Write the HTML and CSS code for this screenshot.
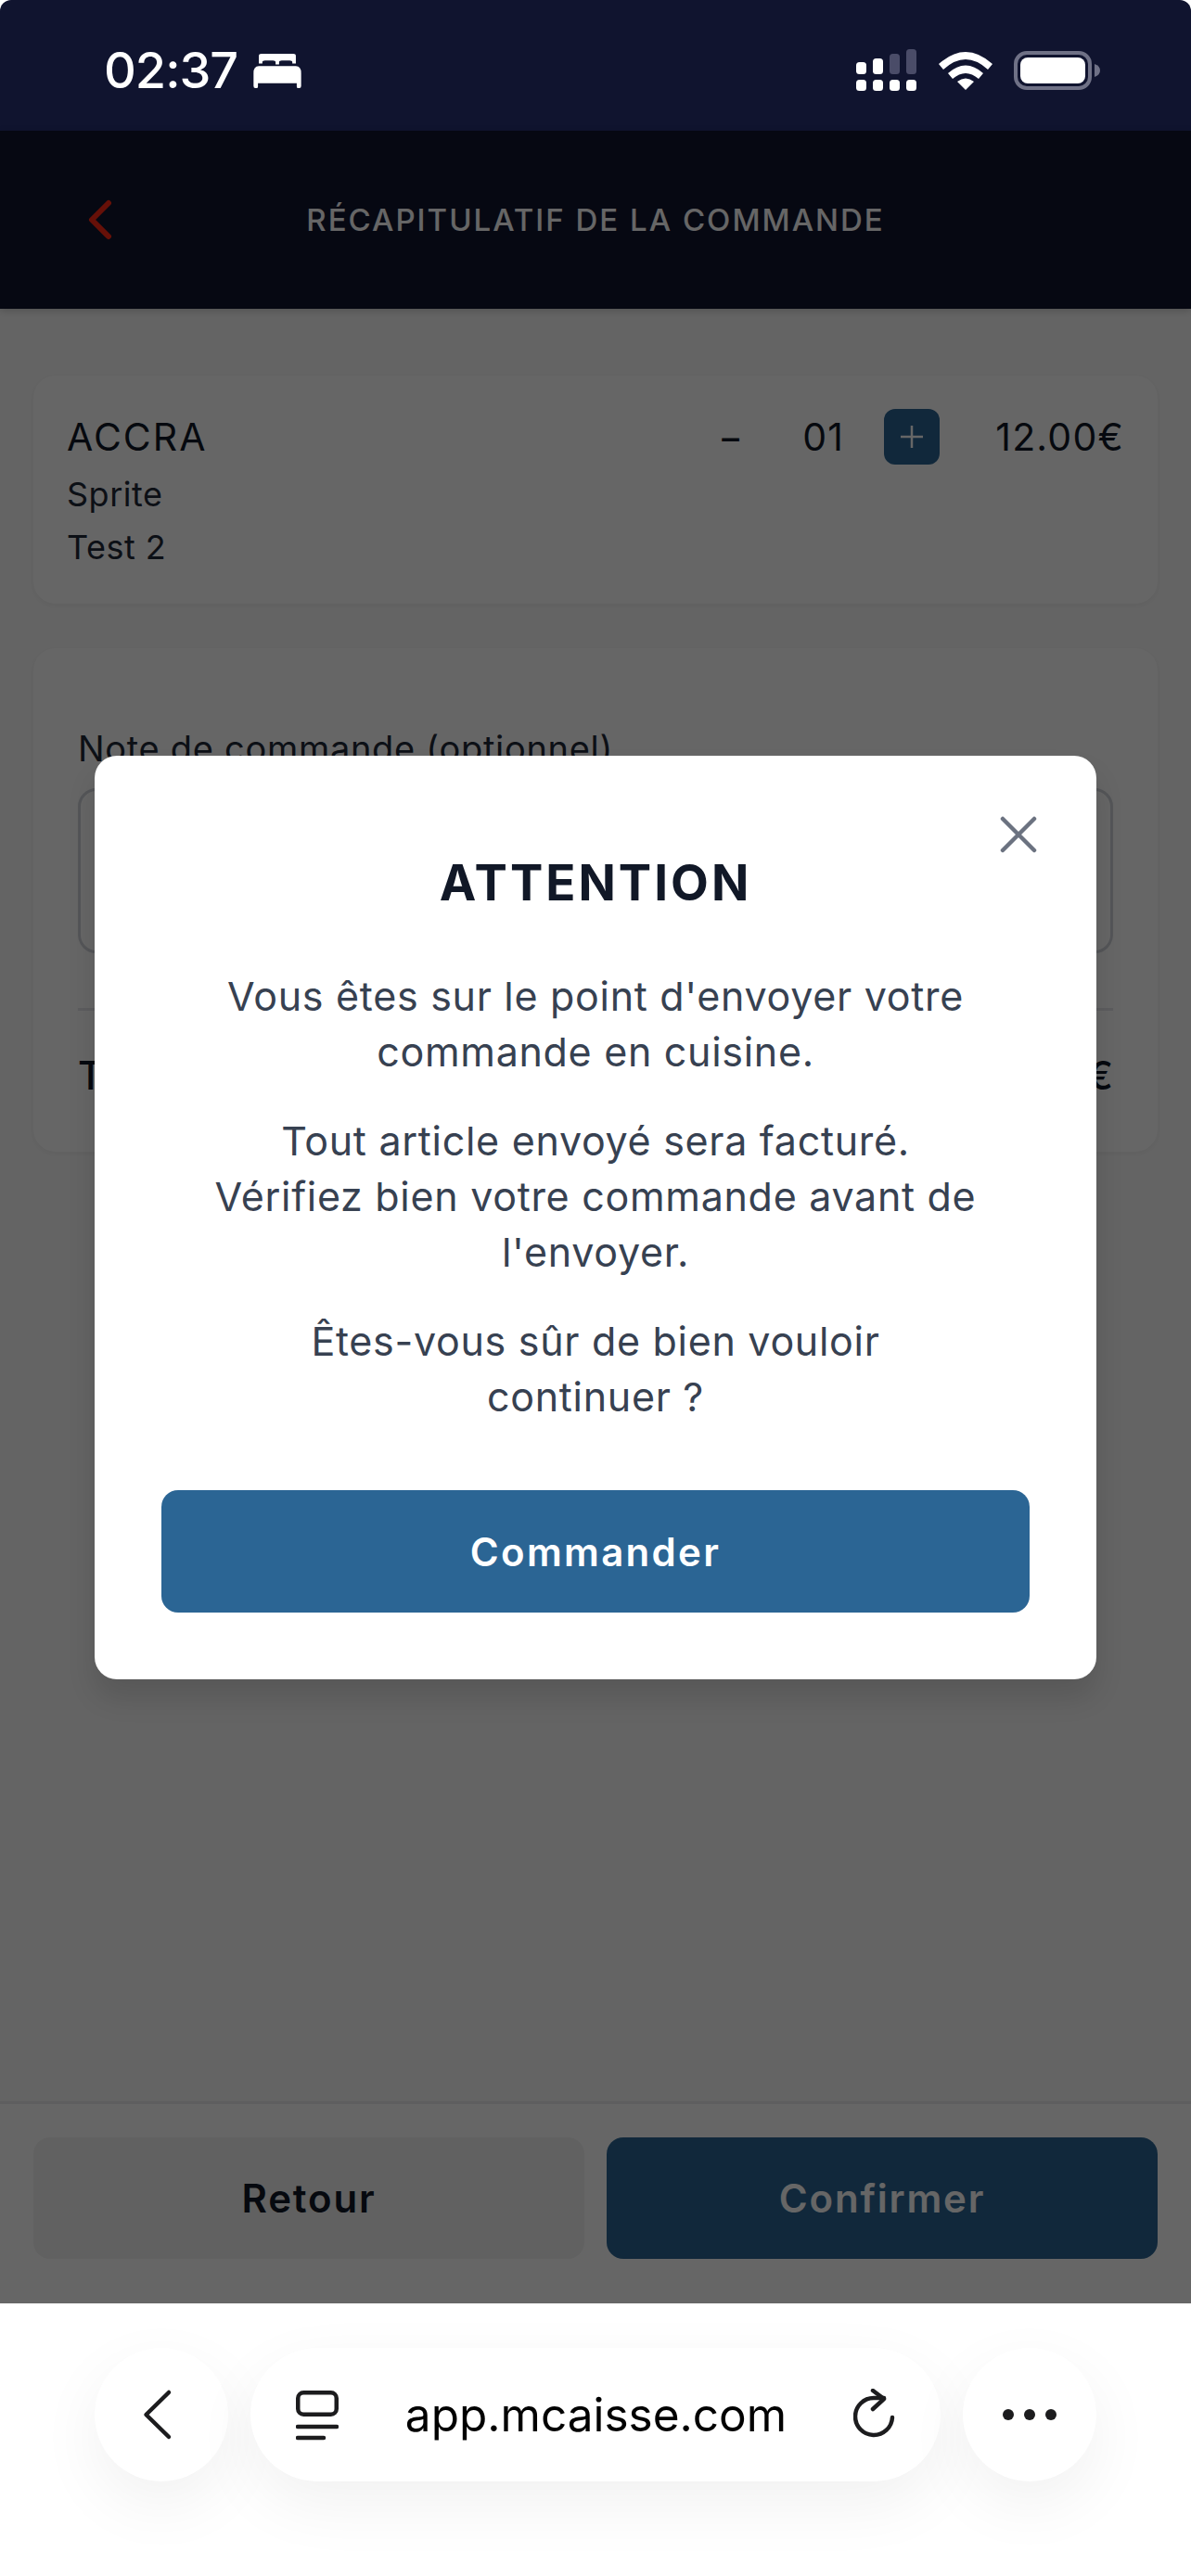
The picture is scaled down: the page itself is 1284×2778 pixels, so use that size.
FILE: index.html
```html
<!DOCTYPE html>
<html lang="fr">
<head>
    <meta charset="UTF-8">
    <meta name="viewport" content="width=device-width, initial-scale=1.0">
    <title>Récapitulatif de la commande</title>
    <link rel="stylesheet" href="styles.css">
</head>
<body>
    <div class="screen">
        <!-- iOS status bar -->
        <div class="status-bar">
            <div class="status-left">
                <span class="clock">02:37</span>
                <svg class="bed-icon" width="56" height="38" viewBox="0 0 56 40">
                    <path fill="#fff" d="M7 2.5Q7 0 10 0H46Q49 0 49 2.5V11H45V9.5Q45 7.5 42 7.5H33Q30 7.5 30 9.5V12H26V9.5Q26 7.5 23 7.5H14Q11 7.5 11 9.5V11H7Z"/>
                    <path fill="#fff" d="M7 14H49Q55 14 55 22V36.5Q55 39 53 39H51.5Q50 39 50 37V33.5H6V37Q6 39 4.5 39H3Q1 39 1 36.5V22Q1 14 7 14Z"/>
                </svg>
            </div>
            <div class="status-right">
                <svg class="signal-icon" width="66" height="46" viewBox="0 0 66 46">
                    <rect x="0" y="14" width="11" height="13" rx="3.5" fill="#fff"/>
                    <rect x="18" y="10" width="11" height="17" rx="3.5" fill="#fff"/>
                    <rect x="36" y="5" width="11" height="22" rx="3.5" fill="#4a4c68"/>
                    <rect x="54" y="0" width="11" height="27" rx="3.5" fill="#4a4c68"/>
                    <rect x="0" y="33" width="11" height="12" rx="3.5" fill="#fff"/>
                    <rect x="18" y="33" width="11" height="12" rx="3.5" fill="#fff"/>
                    <rect x="36" y="33" width="11" height="12" rx="3.5" fill="#fff"/>
                    <rect x="54" y="33" width="11" height="12" rx="3.5" fill="#fff"/>
                </svg>
                <svg class="wifi-icon" width="58" height="42" viewBox="0 0 58 42">
                    <path fill="#fff" d="M0 14Q29 -12 58 14L53 20Q29 -2 5 20Z"/>
                    <path fill="#fff" d="M10 24Q29 7 48 24L43 30Q29 18 15 30Z"/>
                    <path fill="#fff" d="M20 33Q29 26 38 33L29 42Z"/>
                </svg>
                <svg class="battery-icon" width="94" height="42" viewBox="0 0 94 42">
                    <rect x="2" y="2" width="80" height="38" rx="12" fill="none" stroke="#6f7186" stroke-width="4"/>
                    <rect x="7" y="7" width="70" height="28" rx="8" fill="#fff"/>
                    <path fill="#6f7186" d="M87 14Q93 16 93 21Q93 26 87 28Z"/>
                </svg>
            </div>
        </div>

        <div class="app">
            <header class="app-header">
                <svg class="header-back" width="28" height="44" viewBox="0 0 28 44">
                    <path d="M23 4L5 22L23 40" fill="none" stroke="#ff2a14" stroke-width="6" stroke-linecap="round" stroke-linejoin="round"/>
                </svg>
                <h1 class="header-title">RÉCAPITULATIF DE LA COMMANDE</h1>
            </header>

            <main class="content">
                <section class="card item-card">
                    <div class="item-info">
                        <div class="item-name">ACCRA</div>
                        <div class="item-option">Sprite</div>
                        <div class="item-option">Test 2</div>
                    </div>
                    <div class="item-controls">
                        <span class="qty-minus">−</span>
                        <span class="qty-value">01</span>
                        <span class="qty-plus">
                            <svg width="24" height="24" viewBox="0 0 24 24">
                                <path d="M12 0V24M0 12H24" stroke="#fff" stroke-width="2.5"/>
                            </svg>
                        </span>
                        <span class="item-price">12.00€</span>
                    </div>
                </section>

                <section class="card note-card">
                    <label class="note-label">Note de commande (optionnel)</label>
                    <div class="note-box"></div>
                    <div class="total-row">
                        <span>Total</span>
                        <span>12.00€</span>
                    </div>
                </section>
            </main>

            <footer class="app-footer">
                <button class="btn btn-back">Retour</button>
                <button class="btn btn-confirm">Confirmer</button>
            </footer>

            <!-- Confirmation dialog -->
            <div class="overlay">
                <div class="modal">
                    <svg class="modal-close" width="40" height="40" viewBox="0 0 40 40">
                        <path d="M3 3L37 37M37 3L3 37" stroke="#6b7280" stroke-width="4.5" stroke-linecap="round"/>
                    </svg>
                    <h2 class="modal-title">ATTENTION</h2>
                    <p class="modal-text">Vous êtes sur le point d'envoyer votre commande en cuisine.</p>
                    <p class="modal-text">Tout article envoyé sera facturé.<br>Vérifiez bien votre commande avant de l'envoyer.</p>
                    <p class="modal-text modal-text-last">Êtes-vous sûr de bien vouloir<br>continuer ?</p>
                    <button class="btn-order">Commander</button>
                </div>
            </div>
        </div>

        <!-- Browser toolbar -->
        <div class="browser-bar">
            <div class="round-btn">
                <svg width="40" height="56" viewBox="0 0 40 56">
                    <path d="M28 4L3.5 28L28 52" fill="none" stroke="#1c1c1e" stroke-width="4.5" stroke-linecap="round" stroke-linejoin="round"/>
                </svg>
            </div>
            <div class="url-pill">
                <svg width="46" height="56" viewBox="0 0 46 56">
                    <rect x="2.25" y="4.25" width="41.5" height="23.5" rx="6" fill="none" stroke="#1c1c1e" stroke-width="4.5"/>
                    <path d="M2 41H44M2 53H30" stroke="#1c1c1e" stroke-width="4.5" stroke-linecap="round"/>
                </svg>
                <span class="url-text">app.mcaisse.com</span>
                <svg width="46" height="56" viewBox="0 0 46 56">
                    <path d="M42 31A20 20 0 1 1 22 10H33" fill="none" stroke="#1c1c1e" stroke-width="4.5" stroke-linecap="round"/>
                    <path d="M21 2L33 11L21 22" fill="none" stroke="#1c1c1e" stroke-width="4.5" stroke-linecap="round" stroke-linejoin="round"/>
                </svg>
            </div>
            <div class="round-btn">
                <span class="dot"></span><span class="dot"></span><span class="dot"></span>
            </div>
        </div>
    </div>
</body>
</html>
```

FILE: styles.css
```css
* {
    box-sizing: border-box;
}
body {
    margin: 0;
    background: #fff;
    font-family: Inter, "Liberation Sans", sans-serif;
}
.screen {
    width: 1284px;
    height: 2778px;
    display: flex;
    flex-direction: column;
    overflow: hidden;
    border-radius: 12px 12px 0 0;
}

/* status bar */
.status-bar {
    height: 141px;
    flex: none;
    padding: 10px 97px 0 112px;
    display: flex;
    justify-content: space-between;
    align-items: center;
    background: #10142f;
    color: #fff;
}
.status-left {
    display: flex;
    align-items: center;
    gap: 15px;
}
.clock {
    font-size: 54px;
    font-weight: 500;
    letter-spacing: -1px;
}
.bed-icon {
    margin-top: 2px;
}
.status-right {
    display: flex;
    align-items: center;
    gap: 23px;
}

/* app */
.app {
    flex: 1;
    position: relative;
    display: flex;
    flex-direction: column;
    background: #fafafa;
}
.app-header {
    height: 192px;
    flex: none;
    position: relative;
    display: flex;
    align-items: center;
    justify-content: center;
    background: #10142f;
    box-shadow: 0 2px 8px rgba(0, 0, 0, 0.2);
}
.header-back {
    position: absolute;
    left: 94px;
    top: 74px;
}
.header-title {
    margin: 0;
    color: #fff;
    font-size: 33px;
    font-weight: 500;
    letter-spacing: 2px;
}
.content {
    flex: 1;
    padding: 72px 36px 0;
}
.card {
    background: #fff;
    border-radius: 24px;
    box-shadow: 0 2px 6px rgba(0, 0, 0, 0.05);
}
.item-card {
    height: 246px;
    padding: 36px 36px 0;
    display: flex;
    justify-content: space-between;
    align-items: flex-start;
}
.item-name {
    margin: 2px 0 6px;
    font-size: 41px;
    line-height: 56px;
    letter-spacing: 2px;
    color: #111827;
}
.item-option {
    font-size: 36px;
    line-height: 57px;
    letter-spacing: 0.5px;
    color: #1f2937;
}
.item-controls {
    display: flex;
    align-items: center;
    font-size: 41px;
    letter-spacing: 1.2px;
    color: #111827;
}
.qty-minus {
    width: 30px;
    text-align: center;
}
.qty-value {
    margin-left: 62px;
    width: 44px;
    text-align: center;
}
.qty-plus {
    margin-left: 44px;
    width: 60px;
    height: 60px;
    border-radius: 12px;
    background: #2b6594;
    display: flex;
    align-items: center;
    justify-content: center;
}
.item-price {
    margin-left: 60px;
}
.note-card {
    margin-top: 48px;
    height: 543px;
    padding: 84px 48px 0;
}
.note-label {
    display: block;
    font-size: 38px;
    line-height: 48px;
    letter-spacing: 0.7px;
    color: #1f2937;
}
.note-box {
    margin-top: 19px;
    height: 178px;
    border: 3px solid #d1d5db;
    border-radius: 20px;
}
.total-row {
    margin-top: 59px;
    padding-top: 44px;
    border-top: 3px solid #e5e7eb;
    display: flex;
    justify-content: space-between;
    font-size: 42px;
    font-weight: 500;
    color: #111827;
}
.app-footer {
    height: 218px;
    flex: none;
    padding: 36px 36px 48px;
    display: grid;
    grid-template-columns: 1fr 1fr;
    gap: 24px;
    border-top: 3px solid #ececee;
    background: #fff;
}
.btn {
    border: none;
    border-radius: 18px;
    font-family: inherit;
    font-size: 42px;
    font-weight: 600;
    letter-spacing: 1.8px;
}
.btn-back {
    background: #f2f2f2;
    color: #111827;
}
.btn-confirm {
    background: #2b6594;
    color: #fff;
}

/* dialog */
.overlay {
    position: absolute;
    inset: 0;
    background: rgba(0, 0, 0, 0.6);
}
.modal {
    position: absolute;
    left: 102px;
    top: 674px;
    width: 1080px;
    height: 996px;
    padding: 105px 72px 0;
    background: #fff;
    border-radius: 24px;
    text-align: center;
    box-shadow: 0 20px 30px rgba(0, 0, 0, 0.12);
}
.modal-close {
    position: absolute;
    top: 65px;
    right: 64px;
}
.modal-title {
    margin: 0 0 60px;
    font-size: 53px;
    line-height: 64px;
    font-weight: 700;
    color: #111827;
    letter-spacing: 3px;
}
.modal-text {
    margin: 0 0 36px;
    font-size: 43px;
    line-height: 60px;
    letter-spacing: 0.7px;
    color: #374151;
}
.modal-text-last {
    margin-bottom: 71px;
}
.btn-order {
    width: 100%;
    height: 132px;
    border: none;
    border-radius: 18px;
    background: #2b6594;
    color: #fff;
    font-family: inherit;
    font-size: 42px;
    font-weight: 600;
    letter-spacing: 2.3px;
}

/* browser toolbar */
.browser-bar {
    height: 294px;
    flex: none;
    padding: 48px 102px 0;
    display: flex;
    align-items: flex-start;
    gap: 24px;
    background: #fff;
}
.round-btn {
    width: 144px;
    height: 144px;
    flex: none;
    border-radius: 50%;
    background: #fff;
    display: flex;
    align-items: center;
    justify-content: center;
    gap: 11px;
    box-shadow: 0 24px 70px rgba(0, 0, 0, 0.06);
}
.url-pill {
    flex: 1;
    height: 144px;
    padding: 0 48px 0 49px;
    border-radius: 72px;
    background: #fff;
    display: flex;
    align-items: center;
    justify-content: space-between;
    box-shadow: 0 24px 70px rgba(0, 0, 0, 0.06);
}
.url-text {
    font-size: 49.5px;
    color: #000;
}
.dot {
    width: 12px;
    height: 12px;
    border-radius: 50%;
    background: #1c1c1e;
}
```
